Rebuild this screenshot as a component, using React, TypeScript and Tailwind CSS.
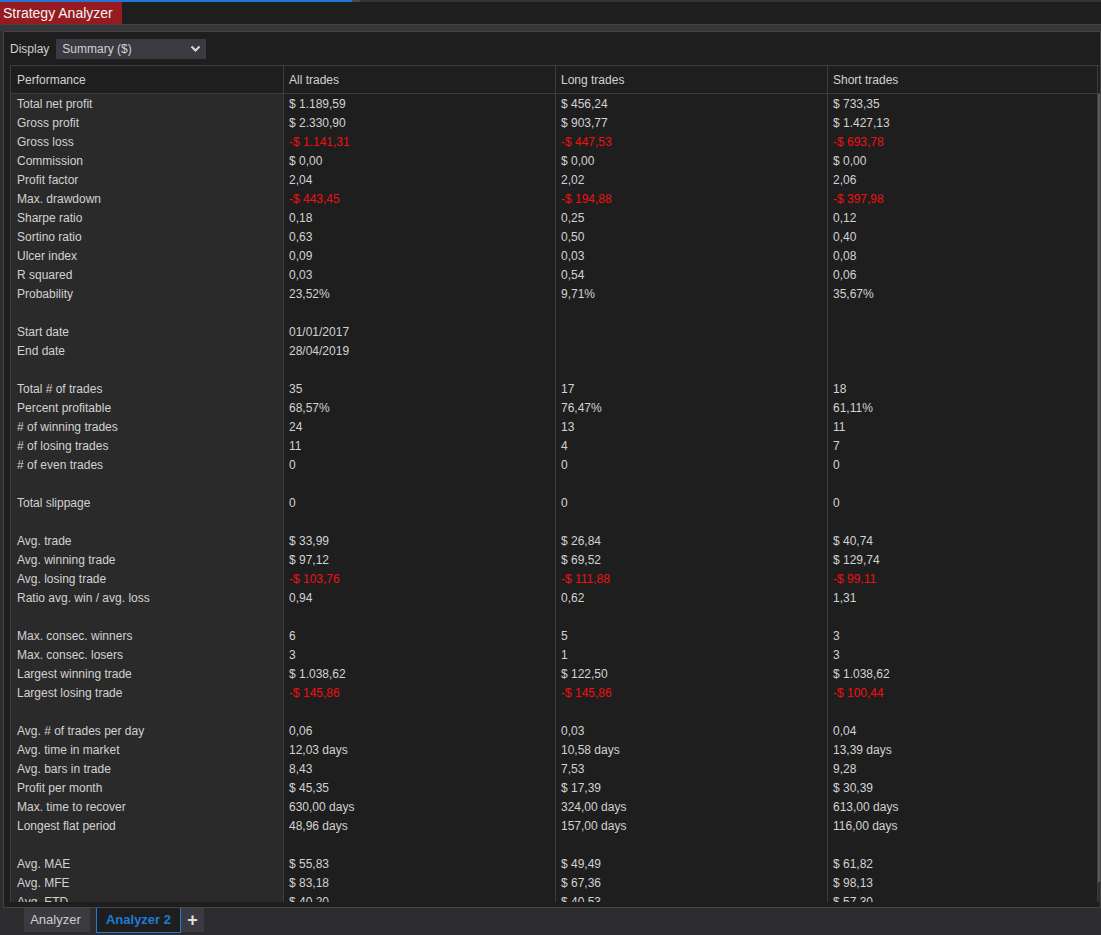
type Row = { label: string; v?: [string, string, string] } | null

const rows: Row[] = [
  { label: "Total net profit", v: ["$ 1.189,59", "$ 456,24", "$ 733,35"] },
  { label: "Gross profit", v: ["$ 2.330,90", "$ 903,77", "$ 1.427,13"] },
  { label: "Gross loss", v: ["-$ 1.141,31", "-$ 447,53", "-$ 693,78"] },
  { label: "Commission", v: ["$ 0,00", "$ 0,00", "$ 0,00"] },
  { label: "Profit factor", v: ["2,04", "2,02", "2,06"] },
  { label: "Max. drawdown", v: ["-$ 443,45", "-$ 194,88", "-$ 397,98"] },
  { label: "Sharpe ratio", v: ["0,18", "0,25", "0,12"] },
  { label: "Sortino ratio", v: ["0,63", "0,50", "0,40"] },
  { label: "Ulcer index", v: ["0,09", "0,03", "0,08"] },
  { label: "R squared", v: ["0,03", "0,54", "0,06"] },
  { label: "Probability", v: ["23,52%", "9,71%", "35,67%"] },
  null,
  { label: "Start date", v: ["01/01/2017", "", ""] },
  { label: "End date", v: ["28/04/2019", "", ""] },
  null,
  { label: "Total # of trades", v: ["35", "17", "18"] },
  { label: "Percent profitable", v: ["68,57%", "76,47%", "61,11%"] },
  { label: "# of winning trades", v: ["24", "13", "11"] },
  { label: "# of losing trades", v: ["11", "4", "7"] },
  { label: "# of even trades", v: ["0", "0", "0"] },
  null,
  { label: "Total slippage", v: ["0", "0", "0"] },
  null,
  { label: "Avg. trade", v: ["$ 33,99", "$ 26,84", "$ 40,74"] },
  { label: "Avg. winning trade", v: ["$ 97,12", "$ 69,52", "$ 129,74"] },
  { label: "Avg. losing trade", v: ["-$ 103,76", "-$ 111,88", "-$ 99,11"] },
  { label: "Ratio avg. win / avg. loss", v: ["0,94", "0,62", "1,31"] },
  null,
  { label: "Max. consec. winners", v: ["6", "5", "3"] },
  { label: "Max. consec. losers", v: ["3", "1", "3"] },
  { label: "Largest winning trade", v: ["$ 1.038,62", "$ 122,50", "$ 1.038,62"] },
  { label: "Largest losing trade", v: ["-$ 145,86", "-$ 145,86", "-$ 100,44"] },
  null,
  { label: "Avg. # of trades per day", v: ["0,06", "0,03", "0,04"] },
  { label: "Avg. time in market", v: ["12,03 days", "10,58 days", "13,39 days"] },
  { label: "Avg. bars in trade", v: ["8,43", "7,53", "9,28"] },
  { label: "Profit per month", v: ["$ 45,35", "$ 17,39", "$ 30,39"] },
  { label: "Max. time to recover", v: ["630,00 days", "324,00 days", "613,00 days"] },
  { label: "Longest flat period", v: ["48,96 days", "157,00 days", "116,00 days"] },
  null,
  { label: "Avg. MAE", v: ["$ 55,83", "$ 49,49", "$ 61,82"] },
  { label: "Avg. MFE", v: ["$ 83,18", "$ 67,36", "$ 98,13"] },
  { label: "Avg. ETD", v: ["$ 40,20", "$ 40,53", "$ 57,30"] },
]

const cols = ["w-[272px]", "w-[272px]", "w-[270px]"]

function Cell({ text, w }: { text: string; w: string }) {
  const neg = text.startsWith("-")
  return (
    <div className={`${w} h-[19px] shrink-0 overflow-hidden border-l border-[#3c3c3c] pl-[5px] leading-[21px] ${neg ? "text-[#f01010]" : "text-[#d2d2d2]"}`}>
      {text}
    </div>
  )
}

export default function App() {
  return (
    <div
      className="relative flex h-[935px] w-[1101px] flex-col overflow-hidden bg-[#2d2d30] text-[12px] text-[#d2d2d2]"
      style={{ fontFamily: '"Liberation Sans", Arial, sans-serif' }}
    >
      {/* top strip */}
      <div className="h-[24px] shrink-0 bg-[#1e1e1e]">
        <div className="flex h-[2px]">
          <div className="w-[352px] bg-[#2276d2]" />
          <div className="w-[8px] bg-[#4a4a4a]" />
          <div className="flex-1 bg-[#333]" />
        </div>
        <div className="flex h-[22px] w-[122px] items-center bg-[#951b21] pl-[3px] text-[14px] text-[#f4f4f4]">
          Strategy Analyzer
        </div>
      </div>
      <div className="h-[7px] shrink-0 border-t border-[#444] bg-[#37373a]" />

      {/* panel */}
      <div className="ml-[3px] flex h-[877px] shrink-0 flex-col border border-[#444] bg-[#1e1e1e] pl-[6px]">
        <div className="flex h-[33px] shrink-0 items-center gap-[7px] pt-[1px]">
          <span className="text-[#d2d2d2]">Display</span>
          <div className="flex h-[20px] w-[150px] items-center justify-between bg-[#3a3a40] pl-[6px] pr-[5px]">
            <span>Summary ($)</span>
            <svg width="11" height="8" viewBox="0 0 11 8" fill="none">
              <path d="M1.5 1.5 L5.5 5.5 L9.5 1.5" stroke="#d8d8d8" strokeWidth="2" />
            </svg>
          </div>
        </div>

        <div className="flex h-[837px] overflow-hidden border-l border-t border-[#3c3c3c]">
          <div className="flex flex-col">
            {/* header */}
            <div className="flex h-[28px] shrink-0 border-b border-[#3c3c3c] bg-[#1e1e1e] leading-[29px]">
              <div className="h-full w-[272px] pl-[6px]">Performance</div>
              <div className="h-full w-[272px] border-l border-[#3c3c3c] pl-[5px]">All trades</div>
              <div className="h-full w-[272px] border-l border-[#3c3c3c] pl-[5px]">Long trades</div>
              <div className="h-full w-[270px] border-l border-[#3c3c3c] pl-[5px]">Short trades</div>
            </div>
            {rows.map((r, i) => (
              <div key={i} className="flex h-[19px] shrink-0">
                <div className="h-[19px] w-[272px] shrink-0 overflow-hidden bg-[#2a2a2a] pl-[6px] leading-[21px]">{r ? r.label : ""}</div>
                {cols.map((w, j) => (
                  <Cell key={j} w={w} text={r && r.v ? r.v[j] : ""} />
                ))}
              </div>
            ))}
          </div>
          {/* scrollbar */}
          <div className="flex w-[6px] flex-col border-l border-[#3c3c3c]">
            <div className="h-[28px] border-b border-[#3c3c3c]" />
            <div className="h-[788px] bg-[#5c5c5c]" />
            <div className="flex-1 bg-[#2e2e2e]" />
          </div>
        </div>
      </div>

      {/* tabs */}
      <div className="flex h-[27px] items-start pl-[24px]">
        <div className="flex h-[24px] w-[66px] items-center justify-center pr-[3px] bg-[#3a3a40] text-[13px] text-[#cfcfcf]">Analyzer</div>
        <div className="ml-[6px] flex h-[25px] w-[85px] items-center justify-center border border-t-0 border-[#1e7ad6] bg-[#1e1e1e] text-[13px] font-bold text-[#1e7ad6]">
          Analyzer 2
        </div>
        <div className="flex h-[24px] w-[23px] items-center justify-center bg-[#3a3a40] text-[18px] font-bold leading-none text-[#e0e0e0]">+</div>
      </div>
    </div>
  )
}
